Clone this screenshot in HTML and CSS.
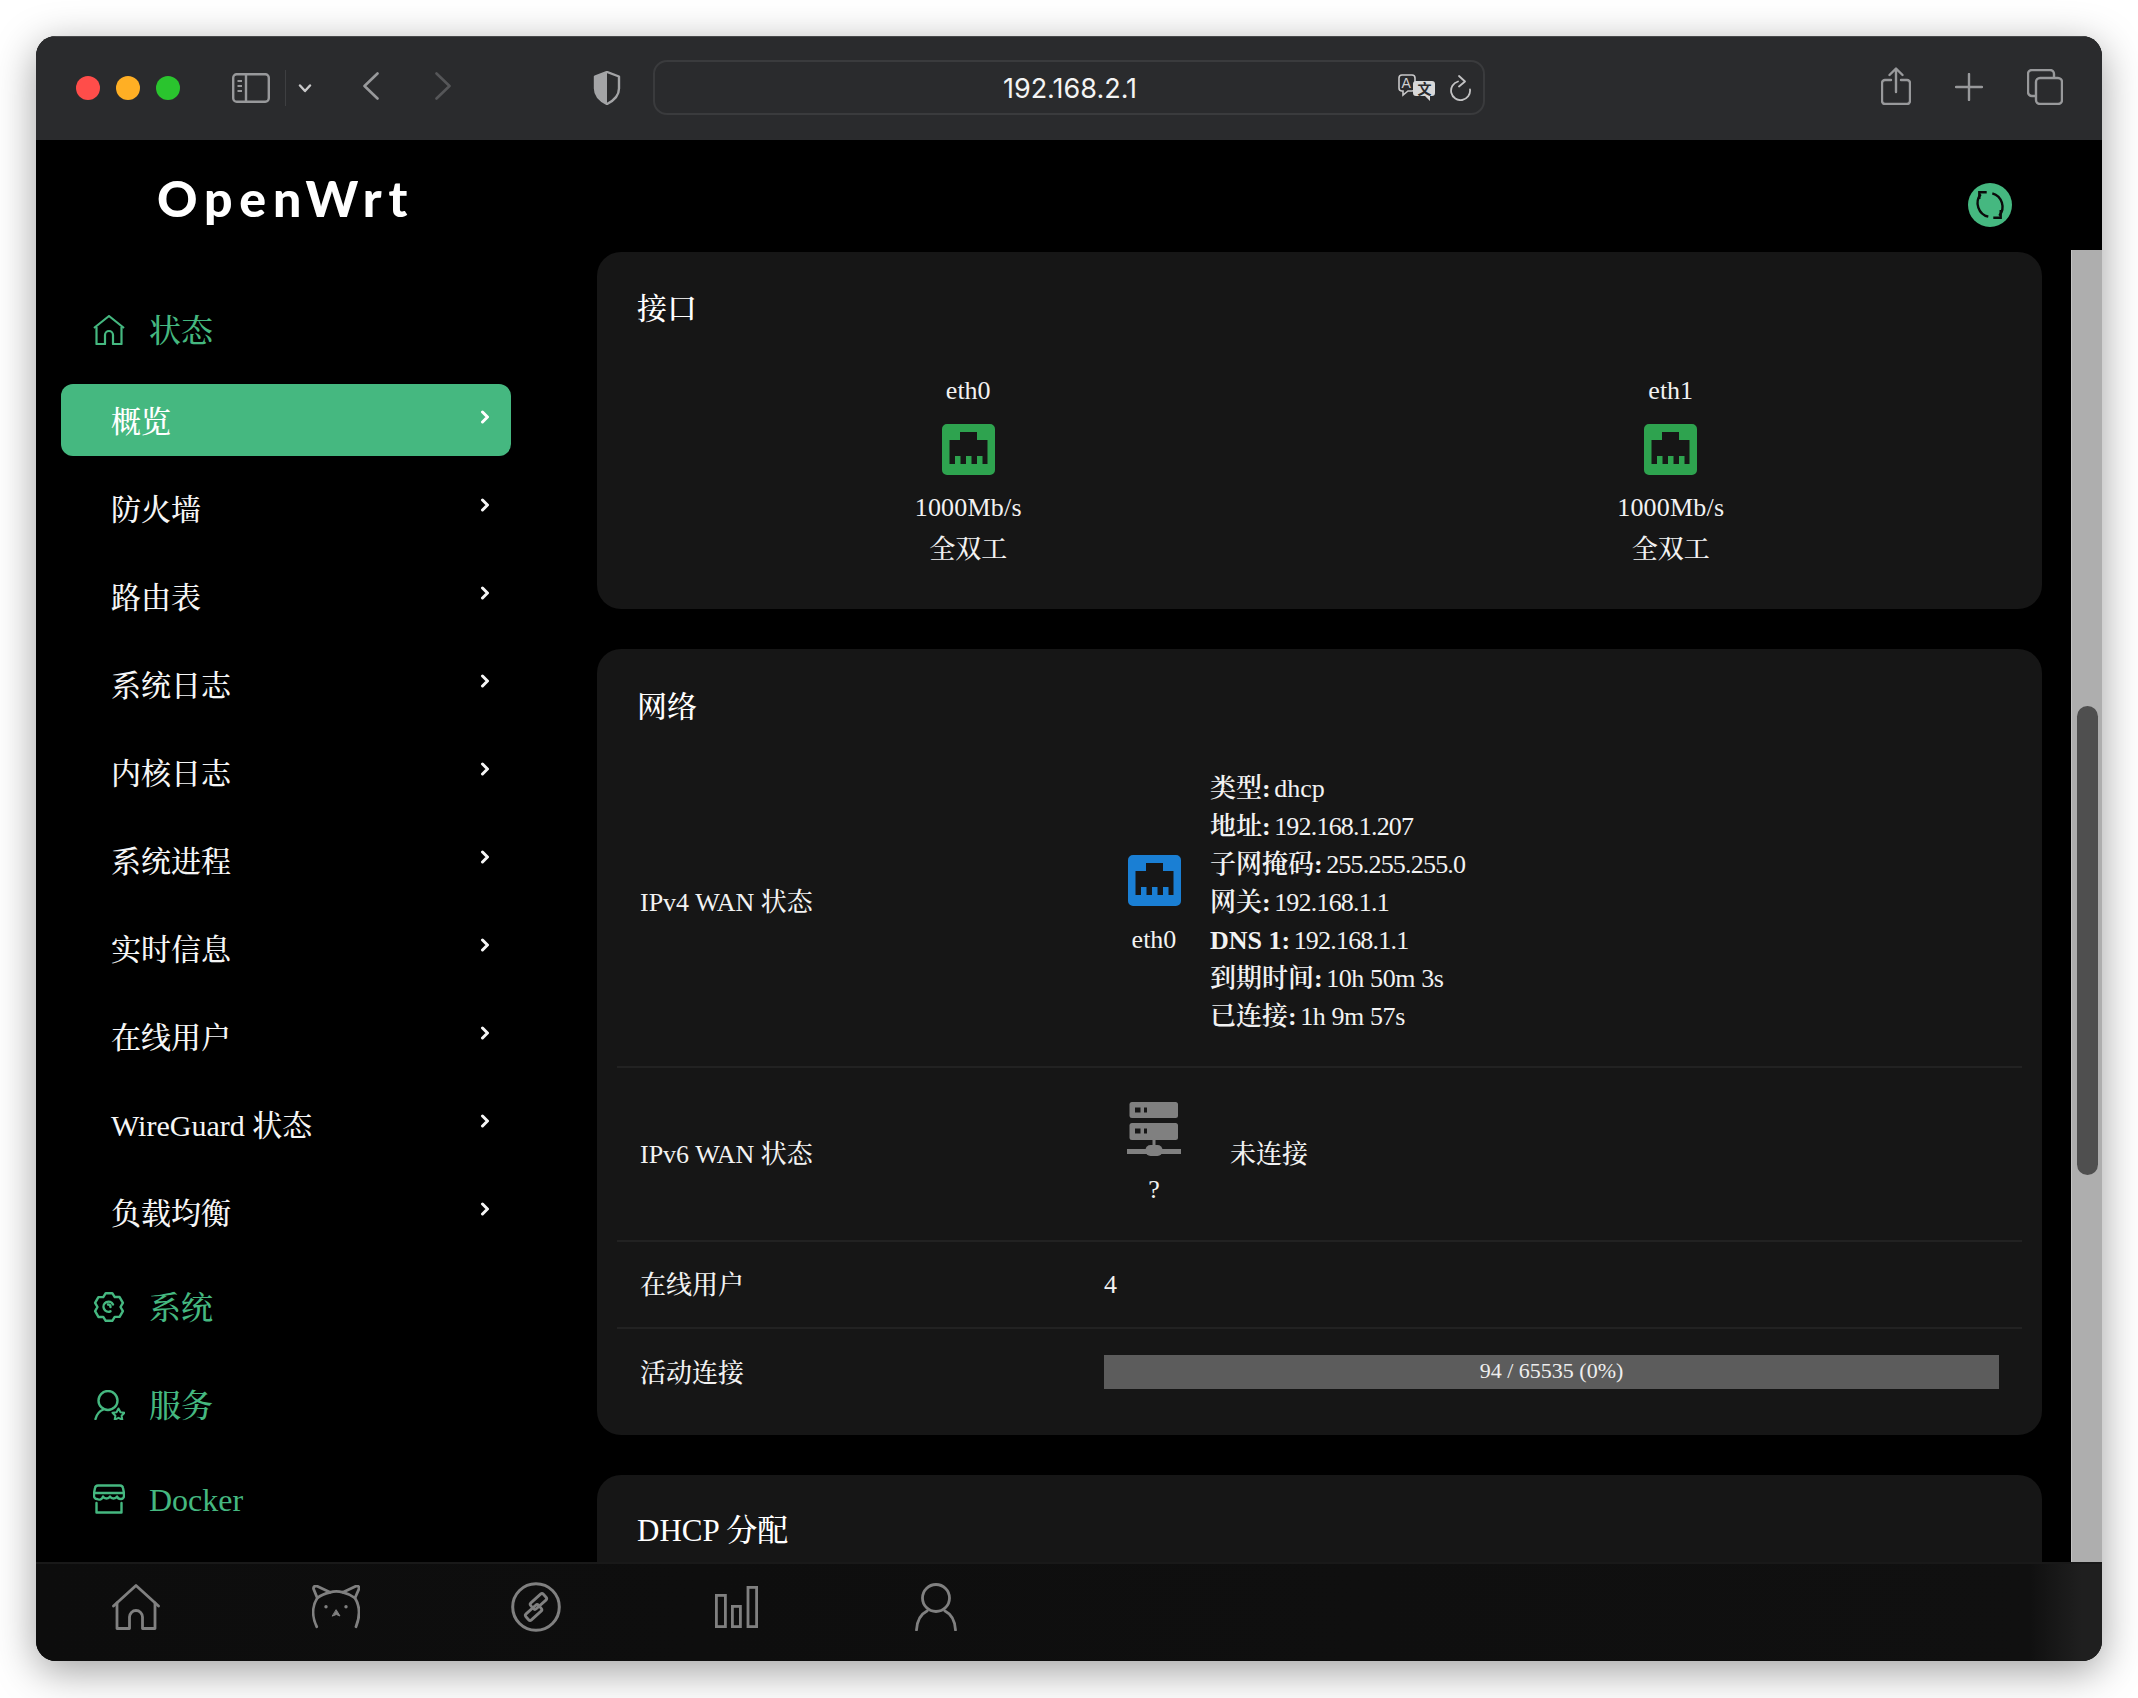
FILE: index.html
```html
<!DOCTYPE html>
<html lang="zh-CN">
<head>
<meta charset="utf-8">
<title>OpenWrt</title>
<link rel="stylesheet" href="styles.css">
</head>
<body>
<div class="window">
  <header class="toolbar">
    <div class="lights"><span class="light red"></span><span class="light yellow"></span><span class="light green"></span></div>
    <svg class="tb-sidebar" viewBox="0 0 38 30" fill="none" stroke="#98999b" stroke-width="2.4"><rect x="1.2" y="1.2" width="35.6" height="27.6" rx="3.5"/><path d="M14 1v28"/><path d="M5.5 8h4.500M5.500 13h4.500M5.500 18h4.500" stroke-width="2"/></svg>
    <span class="tb-divider"></span>
    <svg class="tb-drop" viewBox="0 0 14 9" fill="none" stroke="#c9c9ca" stroke-width="2.400" stroke-linecap="round" stroke-linejoin="round"><path d="M2 1.500 7 7l5-5.500"/></svg>
    <svg class="tb-back" viewBox="0 0 16 28" fill="none" stroke="#98999b" stroke-width="2.600" stroke-linecap="round" stroke-linejoin="round"><path d="M14.500 1.500 1.500 14l13 12.500"/></svg>
    <svg class="tb-forward" viewBox="0 0 16 28" fill="none" stroke="#555658" stroke-width="2.600" stroke-linecap="round" stroke-linejoin="round"><path d="M1.500 1.500 14.500 14 1.500 26.500"/></svg>
    <svg class="tb-shield" viewBox="0 0 28 34"><path d="M14 1 2 5.500v12C2 25 8 30 14 33c6-3 12-8 12-15.500v-12z" fill="none" stroke="#a3a4a6" stroke-width="2.400" stroke-linejoin="round"/><path d="M14 1 2 5.500v12C2 25 8 30 14 33z" fill="#a3a4a6"/></svg>
    <div class="address">
      <span class="url">192.168.2.1</span>
      <svg class="tb-translate" viewBox="0 0 37 27"><path d="M4 1h10a3 3 0 0 1 3 3v10a3 3 0 0 1-3 3H10l-5 4v-4H4a3 3 0 0 1-3-3V4a3 3 0 0 1 3-3z" fill="#2a2b2d" stroke="#c8c8c9" stroke-width="1.600"/><text x="3.500" y="14" class="tr-a">A</text><path d="M18 7h16a3 3 0 0 1 3 3v9a3 3 0 0 1-3 3h-2v5l-5-5h-9a3 3 0 0 1-3-3v-9a3 3 0 0 1 3-3z" fill="#d8d8d9"/><text x="19.500" y="20" class="tr-b">文</text></svg>
      <svg class="tb-reload" viewBox="0 0 22 26" fill="none" stroke="#c2c2c3" stroke-width="1.800" stroke-linecap="round" stroke-linejoin="round"><path d="M8 6.500a9.500 9.500 0 1 0 12 8"/><path d="M9 1l6 5.500-6 5"/></svg>
    </div>
    <svg class="tb-share" viewBox="0 0 30 38" fill="none" stroke="#98999b" stroke-width="2.400" stroke-linecap="round" stroke-linejoin="round"><path d="M10 13H4a3 3 0 0 0-3 3v18a3 3 0 0 0 3 3h22a3 3 0 0 0 3-3V16a3 3 0 0 0-3-3h-6"/><path d="M15 25V2M8.500 8 15 1.500 21.500 8"/></svg>
    <svg class="tb-plus" viewBox="0 0 28 28" fill="none" stroke="#98999b" stroke-width="2.400" stroke-linecap="round"><path d="M14 1v26M1 14h26"/></svg>
    <svg class="tb-tabs" viewBox="0 0 36 36" fill="none" stroke="#98999b" stroke-width="2.400"><path d="M9 27H5a4 4 0 0 1-4-4V5a4 4 0 0 1 4-4h18a4 4 0 0 1 4 4v3"/><rect x="9" y="9" width="26" height="26" rx="4"/></svg>
  </header>

  <div class="app">
    <aside class="sidebar">
      <div class="logo">OpenWrt</div>
      <div class="group group-first">
        <svg class="group-icon" viewBox="0 0 32 30" fill="none" stroke="currentColor" stroke-width="2.200" stroke-linejoin="round"><path d="M1 13 16 1l15 12"/><path d="M3.500 12v17H12V20a4 4 0 0 1 8 0v9h8.500V12"/></svg>
        <span>状态</span>
      </div>
      <nav class="nav">
        <a class="nav-item active"><span>概览</span><svg class="chev" viewBox="0 0 10 14" fill="none" stroke="currentColor" stroke-width="3" stroke-linecap="round" stroke-linejoin="round"><path d="M2.500 2 7.500 7l-5 5"/></svg></a>
        <a class="nav-item"><span>防火墙</span><svg class="chev" viewBox="0 0 10 14" fill="none" stroke="currentColor" stroke-width="3" stroke-linecap="round" stroke-linejoin="round"><path d="M2.500 2 7.500 7l-5 5"/></svg></a>
        <a class="nav-item"><span>路由表</span><svg class="chev" viewBox="0 0 10 14" fill="none" stroke="currentColor" stroke-width="3" stroke-linecap="round" stroke-linejoin="round"><path d="M2.500 2 7.500 7l-5 5"/></svg></a>
        <a class="nav-item"><span>系统日志</span><svg class="chev" viewBox="0 0 10 14" fill="none" stroke="currentColor" stroke-width="3" stroke-linecap="round" stroke-linejoin="round"><path d="M2.500 2 7.500 7l-5 5"/></svg></a>
        <a class="nav-item"><span>内核日志</span><svg class="chev" viewBox="0 0 10 14" fill="none" stroke="currentColor" stroke-width="3" stroke-linecap="round" stroke-linejoin="round"><path d="M2.500 2 7.500 7l-5 5"/></svg></a>
        <a class="nav-item"><span>系统进程</span><svg class="chev" viewBox="0 0 10 14" fill="none" stroke="currentColor" stroke-width="3" stroke-linecap="round" stroke-linejoin="round"><path d="M2.500 2 7.500 7l-5 5"/></svg></a>
        <a class="nav-item"><span>实时信息</span><svg class="chev" viewBox="0 0 10 14" fill="none" stroke="currentColor" stroke-width="3" stroke-linecap="round" stroke-linejoin="round"><path d="M2.500 2 7.500 7l-5 5"/></svg></a>
        <a class="nav-item"><span>在线用户</span><svg class="chev" viewBox="0 0 10 14" fill="none" stroke="currentColor" stroke-width="3" stroke-linecap="round" stroke-linejoin="round"><path d="M2.500 2 7.500 7l-5 5"/></svg></a>
        <a class="nav-item"><span>WireGuard 状态</span><svg class="chev" viewBox="0 0 10 14" fill="none" stroke="currentColor" stroke-width="3" stroke-linecap="round" stroke-linejoin="round"><path d="M2.500 2 7.500 7l-5 5"/></svg></a>
        <a class="nav-item"><span>负载均衡</span><svg class="chev" viewBox="0 0 10 14" fill="none" stroke="currentColor" stroke-width="3" stroke-linecap="round" stroke-linejoin="round"><path d="M2.500 2 7.500 7l-5 5"/></svg></a>
      </nav>
      <div class="group group-sys">
        <svg class="group-icon" viewBox="0 0 32 30" fill="none" stroke="currentColor" stroke-width="2.400" stroke-linejoin="round" stroke-linecap="round"><path d="M12.700 1.200h6.600l2.450 3.840h4.850l3.300 5.760L27.500 15l2.400 4.200-3.300 5.700h-4.850L19.300 28.800h-6.600l-2.450-3.840H5.400l-3.300-5.760L4.500 15 2.100 10.800l3.300-5.700h4.850z"/><path d="M20 12.500a5 5 0 1 0-2.500 6.800M15 12.500a2.500 2.500 0 0 1 2.500 2.500"/></svg>
        <span>系统</span>
      </div>
      <div class="group group-srv">
        <svg class="group-icon" viewBox="0 0 32 30" fill="none" stroke="currentColor" stroke-width="2.400" stroke-linejoin="round" stroke-linecap="round"><circle cx="15" cy="10.500" r="9.500"/><path d="M2.500 29c1-4 4-8 8-9.500"/><path d="M25.500 18.500l2 3.700 4 .6-2.900 2.900.7 4-3.800-1.900-3.800 1.900.7-4-2.900-2.900 4-.6z" stroke-width="2"/></svg>
        <span>服务</span>
      </div>
      <div class="group group-docker">
        <svg class="group-icon" viewBox="0 0 32 30" fill="none" stroke="currentColor" stroke-width="2.400" stroke-linejoin="round" stroke-linecap="round"><path d="M5 1.500h22a3 3 0 0 1 3 2.500l1 5v3a3 3 0 0 1-3 3 4 4 0 0 1-4-2.500 4 4 0 0 1-7 0 4 4 0 0 1-7 0A4 4 0 0 1 4 15a3 3 0 0 1-3-3V9l1-5a3 3 0 0 1 3-2.500z"/><path d="M1.500 9h29"/><path d="M3.500 19v9.500h25V19"/></svg>
        <span>Docker</span>
      </div>
    </aside>

    <main class="main">
      <div class="topbar">
        <svg class="refresh" viewBox="0 0 44 44"><circle cx="22" cy="22" r="22" fill="#45b880"/><g fill="none" stroke="#0a0a0a" stroke-width="2.400"><path d="M12.700 11.300A14 14 0 0 0 20.300 33.700"/><path d="M24.300 10.300A14 14 0 0 1 31.300 32.700"/><path d="M18.700 9.300H11.300V16"/><path d="M25.300 34.700H32.700V27"/></g></svg>
      </div>
      <div class="scroller">
        <div class="cards">
          <section class="card card-ports">
            <h3 class="card-title">接口</h3>
            <div class="ports">
              <div class="port">
                <div class="port-name">eth0</div>
                <svg class="rj45 rj-green" viewBox="0 0 53 51"><path fill-rule="evenodd" d="M5 0h43a5 5 0 0 1 5 5v41a5 5 0 0 1-5 5H5a5 5 0 0 1-5-5V5a5 5 0 0 1 5-5zM18 8v8H7.500v24H13v-8h5.500v8H24v-8h5.500v8H35v-8h5.500v8h5V16H35V8z"/></svg>
                <div class="port-speed">1000Mb/s</div>
                <div class="port-duplex">全双工</div>
              </div>
              <div class="port">
                <div class="port-name">eth1</div>
                <svg class="rj45 rj-green" viewBox="0 0 53 51"><path fill-rule="evenodd" d="M5 0h43a5 5 0 0 1 5 5v41a5 5 0 0 1-5 5H5a5 5 0 0 1-5-5V5a5 5 0 0 1 5-5zM18 8v8H7.500v24H13v-8h5.500v8H24v-8h5.500v8H35v-8h5.500v8h5V16H35V8z"/></svg>
                <div class="port-speed">1000Mb/s</div>
                <div class="port-duplex">全双工</div>
              </div>
            </div>
          </section>

          <section class="card card-net">
            <h3 class="card-title">网络</h3>
            <div class="row row-v4">
              <div class="row-label">IPv4 WAN 状态</div>
              <div class="row-value wan">
                <div class="ifc">
                  <svg class="rj45 rj-blue" viewBox="0 0 53 51"><path fill-rule="evenodd" d="M5 0h43a5 5 0 0 1 5 5v41a5 5 0 0 1-5 5H5a5 5 0 0 1-5-5V5a5 5 0 0 1 5-5zM18 8v8H7.500v24H13v-8h5.500v8H24v-8h5.500v8H35v-8h5.500v8h5V16H35V8z"/></svg>
                  <div class="ifc-name">eth0</div>
                </div>
                <div class="details">
                  <div><strong>类型:</strong> dhcp</div>
                  <div><strong>地址:</strong> <span class="num">192.168.1.207</span></div>
                  <div><strong>子网掩码:</strong> <span class="num">255.255.255.0</span></div>
                  <div><strong>网关:</strong> <span class="num">192.168.1.1</span></div>
                  <div><strong>DNS 1:</strong> <span class="num">192.168.1.1</span></div>
                  <div><strong>到期时间:</strong> <span class="dur">10h 50m 3s</span></div>
                  <div><strong>已连接:</strong> <span class="dur">1h 9m 57s</span></div>
                </div>
              </div>
            </div>
            <div class="row row-v6">
              <div class="row-label">IPv6 WAN 状态</div>
              <div class="row-value wan">
                <div class="ifc">
                  <svg class="server" viewBox="0 0 54 55" fill="#808080"><rect x="2.500" y="0" width="48.500" height="16" rx="2.500"/><rect x="2.500" y="21" width="48.500" height="17" rx="2.500"/><path d="M25.500 38h3v8h-3zM0 47h54v5H0z"/><rect x="18.500" y="43" width="17" height="11" rx="5"/><path d="M8 5.500h5.500v5H8zM17 5.500h3v5h-3zM8 26.500h5.500v5H8zM17 26.500h3v5h-3z" fill="#161616"/></svg>
                  <div class="ifc-name">?</div>
                </div>
                <div class="offline">未连接</div>
              </div>
            </div>
            <div class="row row-users">
              <div class="row-label">在线用户</div>
              <div class="row-value">4</div>
            </div>
            <div class="row row-conn">
              <div class="row-label">活动连接</div>
              <div class="row-value"><div class="progress">94 / 65535 (0%)</div></div>
            </div>
          </section>

          <section class="card card-dhcp">
            <h3 class="card-title">DHCP 分配</h3>
          </section>
        </div>
        <div class="scrollbar"><div class="thumb"></div></div>
      </div>
    </main>
  </div>

  <footer class="dock">
    <div class="dock-item"><svg class="dock-home" viewBox="0 0 48 46" fill="none" stroke="#808080" stroke-width="2.800" stroke-linejoin="round" stroke-linecap="round"><path d="M1.500 22 24 1.500 46.500 22"/><path d="M5 19v25.500h12.500V33a6.500 6.500 0 0 1 13 0v11.500H43V19"/></svg></div>
    <div class="dock-item"><svg class="dock-cat" viewBox="0 0 48 44" fill="none" stroke="#808080" stroke-width="2.800" stroke-linejoin="round" stroke-linecap="round"><path d="M4.700 41.700C.5 33-.5 22 5.300 13L1.600 4Q1 .8 4.700 1L18 7.300Q24 5.500 31 7.300L44.300 1Q47.500 .8 46.900 4L43 13C48.500 22 47.500 33 44 41.700"/><path d="M5.300 13Q10 9 18 7.300M43 13Q38 9 31 7.300"/><circle cx="14" cy="21.700" r="1.700" fill="#808080" stroke="none"/><circle cx="34" cy="21.700" r="1.700" fill="#808080" stroke="none"/><path d="M24.300 25 28 31l-3.700-1.500L20.500 31z" fill="#808080" stroke="#808080" stroke-width="1"/></svg></div>
    <div class="dock-item"><svg class="dock-link" viewBox="0 0 50 50" fill="none" stroke="#808080"><circle cx="25" cy="25" r="23.300" stroke-width="3"/><g transform="rotate(-42 25 25)" stroke-width="2.800"><rect x="22" y="18.500" width="17" height="8" rx="2"/><rect x="11" y="23.500" width="17" height="8" rx="2"/></g></svg></div>
    <div class="dock-item"><svg class="dock-bars" viewBox="0 0 43 42" fill="none" stroke="#808080" stroke-width="2.800"><rect x="1.400" y="9.400" width="9" height="31.200"/><rect x="17.400" y="20.400" width="8" height="20.200"/><rect x="33" y="1.400" width="8.600" height="39.200"/></svg></div>
    <div class="dock-item"><svg class="dock-user" viewBox="0 0 42 48" fill="none" stroke="#808080" stroke-width="2.800" stroke-linecap="round"><circle cx="21" cy="15" r="13.500"/><path d="M1.500 47C2 38 6 31 12 28M40.500 47C40 38 36 31 30 28"/></svg></div>
  </footer>
</div>
</body>
</html>
```

FILE: styles.css
```css
* { box-sizing: border-box; }
html, body { margin: 0; height: 1698px; overflow: hidden; background: #fff; }
body {
  padding: 36px 36px 37px;
  font-family: "Liberation Serif", "Noto Serif CJK SC", "Noto Sans CJK SC", serif;
  font-size: 26px;
  font-weight: 500;
  color: #f2f2f2;
}
.window {
  height: 100%;
  display: flex;
  flex-direction: column;
  border-radius: 20px;
  overflow: hidden;
  background: #000;
  box-shadow: 0 10px 42px rgba(0, 0, 0, .38);
}

/* toolbar */
.toolbar {
  height: 104px;
  flex: none;
  display: flex;
  align-items: center;
  background: #2a2b2d;
  box-shadow: inset 0 1px #48494b;
  padding-left: 40px;
}
.toolbar svg { display: block; flex: none; }
.lights { display: flex; gap: 16px; }
.light { width: 24px; height: 24px; border-radius: 50%; }
.red { background: #ff4d4a; }
.yellow { background: #ffaf24; }
.green { background: #2ac42e; }
.tb-sidebar { width: 38px; height: 30px; margin-left: 52px; }
.tb-divider { width: 1px; height: 36px; background: #3e3f41; margin-left: 15px; }
.tb-drop { width: 14px; height: 9px; margin-left: 12px; }
.tb-back { width: 16px; height: 28px; margin-left: 51px; margin-top: -4px; }
.tb-forward { width: 16px; height: 28px; margin-left: 56px; margin-top: -4px; }
.tb-shield { width: 28px; height: 34px; margin-left: 142px; margin-top: -1px; }
.address {
  width: 832px;
  height: 55px;
  margin-left: 32px;
  border: 2px solid #3a3b3d;
  border-radius: 14px;
  display: flex;
  align-items: center;
  padding-left: 330px;
  margin-top: -1px;
}
.url {
  font-family: "Inter", "Liberation Sans", sans-serif;
  font-weight: 400;
  font-size: 27px;
  width: 170px;
  padding-top: 2px;
  text-align: center;
  color: #f4f4f4;
}
.tb-translate { width: 37px; height: 27px; margin-left: 243px; }
.tr-a { font-family: "Liberation Sans", sans-serif; font-size: 14px; fill: #d0d0d1; }
.tr-b { font-family: "Noto Sans CJK SC", sans-serif; font-size: 14px; font-weight: 700; fill: #2a2b2d; }
.tb-reload { width: 22px; height: 26px; margin-left: 15px; }
.tb-share { width: 30px; height: 38px; margin-left: 396px; margin-top: -5px; }
.tb-plus { width: 28px; height: 28px; margin-left: 44px; margin-top: -3px; }
.tb-tabs { width: 36px; height: 36px; margin-left: 44px; margin-top: -3px; }

/* app */
.app { flex: 1; min-height: 0; display: flex; overflow: hidden; }
.sidebar { width: 561px; flex: none; padding-left: 25px; color: #45b880; }
.logo {
  height: 90px;
  padding: 33px 0 0 96px;
  font-family: "Lato", sans-serif;
  font-weight: 900;
  font-size: 50px;
  line-height: 50px;
  letter-spacing: 6.8px;
  color: #fff;
}
.group { display: flex; align-items: center; height: 40px; font-size: 32px; line-height: 38px; padding-left: 32px; gap: 24px; }
.group span { padding-top: 2px; }
.group-icon { width: 32px; height: 30px; display: block; flex: none; }
.group-first { margin-top: 80px; }
.nav { margin-top: 34px; }
.nav-item {
  width: 450px;
  height: 72px;
  margin-bottom: 16px;
  padding: 0 21px 0 50px;
  border-radius: 12px;
  display: flex;
  align-items: center;
  justify-content: space-between;
  color: #f6f6f6;
  font-size: 30px;
}
.nav-item span { padding-bottom: 3px; }
.nav-item.active { background: #45b880; color: #fff; }
.chev { width: 10px; height: 14px; margin-top: -6px; display: block; }
.group-sys { margin-top: 39px; }
.group-srv { margin-top: 58px; }
.group-docker { margin-top: 54px; }

/* main */
.main { flex: 1; min-width: 0; display: flex; flex-direction: column; }
.topbar { height: 110px; flex: none; display: flex; justify-content: flex-end; padding: 43px 90px 0 0; }
.refresh { width: 44px; height: 44px; display: block; }
.scroller { flex: 1; min-height: 0; display: flex; justify-content: space-between; }
.cards { width: 1445px; padding-top: 2px; display: flex; flex-direction: column; gap: 40px; }
.card { background: #161616; border-radius: 24px; flex: none; }
.card-title { margin: 0; font-size: 30px; line-height: 40px; font-weight: 500; color: #fff; }
.scrollbar { width: 31px; flex: none; background: #aeaeae; border-left: 1px solid #c4c4c4; padding: 456px 4px 0 5px; }
.thumb { width: 21px; height: 469px; border-radius: 11px; background: #4f4f4f; }

/* ports */
.card-ports { height: 357px; padding: 37px 20px 0; }
.card-ports .card-title { padding-left: 20px; }
.ports { display: grid; grid-template-columns: 1fr 1fr; margin-top: 43px; text-align: center; }
.port-name, .port-speed { line-height: 38px; }
.port-speed { letter-spacing: .2px; }
.rj45 { display: block; width: 53px; height: 51px; margin: 14px auto; }
.rj-green { fill: #2ea34f; }
.rj-blue { fill: #1a7fd4; margin: 0 auto; }
.port-duplex { line-height: 40px; margin-top: 3px; }

/* network */
.card-net { height: 786px; padding: 38px 20px 0; }
.card-net .card-title { padding-left: 20px; margin-bottom: 12px; }
.row { display: flex; align-items: center; border-bottom: 2px solid #222; }
.row-label { width: 487px; flex: none; padding-left: 23px; line-height: 38px; }
.row-value { flex: 1; min-width: 0; line-height: 38px; }
.row-v4 { height: 329px; }
.row-v6 { height: 174px; padding-top: 2px; }
.row-users { height: 87px; }
.row-users .row-label { padding-top: 2px; }
.row-conn { height: 106px; border-bottom: 0; padding-bottom: 20px; }
.row-conn .row-label { padding-top: 4px; }
.wan { display: flex; align-items: center; }
.ifc { width: 100px; margin-right: 6px; flex: none; text-align: center; }
.row-v4 .ifc { padding-top: 8px; }
.row-v4 .ifc-name { margin-top: 15px; }
.server { display: block; width: 54px; height: 55px; margin: 0 auto; }
.row-v6 .ifc-name { margin-top: 14px; }
.details { line-height: 38px; }
.details strong { font-weight: 600; margin-right: -3px; }
.num { letter-spacing: -.8px; }
.dur { letter-spacing: -.4px; }
.offline { margin-left: 20px; }
.progress {
  width: 895px;
  height: 34px;
  background: #5c5c5c;
  text-align: center;
  font-size: 22px;
  line-height: 32px;
  color: #eee;
}

/* DHCP */
.card-dhcp { height: 200px; padding-top: 36px; }
.card-dhcp .card-title { padding-left: 40px; font-size: 31px; }

/* dock */
.dock {
  height: 99px;
  flex: none;
  display: flex;
  align-items: center;
  padding-bottom: 12px;
  border-top: 2px solid #191919;
  background: linear-gradient(90deg, #0d0d0d 0, #101010 96.5%, #1f1f1f 99%, #1f1f1f 100%);
}
.dock-item { width: 200px; display: flex; justify-content: center; }
.dock-home { width: 48px; height: 46px; }
.dock-cat { width: 48px; height: 44px; }
.dock-link { width: 50px; height: 50px; }
.dock-bars { width: 43px; height: 42px; }
.dock-user { width: 42px; height: 48px; }
```
